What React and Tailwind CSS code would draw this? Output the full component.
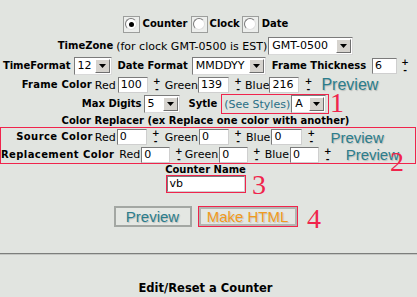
import React from "react";

const B = "text-[10px] font-bold leading-none whitespace-nowrap";
const R = "text-[11px] leading-none whitespace-nowrap";
const LINK = "font-['Liberation_Sans',Arial,sans-serif] text-[#2b7d8c] leading-none whitespace-nowrap [text-shadow:1px_1px_1px_rgba(0,0,0,0.18)]";
const NUM = "absolute font-['Liberation_Serif','Times_New_Roman',serif] text-[28px] leading-none text-[#f0244c]";

function Radio({ checked }) {
  return (
    <span className="w-[17px] h-[17px] border border-[#9c9e9c] bg-[#eceeec] flex items-center justify-center">
      <span className="w-[12px] h-[12px] rounded-full border border-t-[#7a7a7a] border-l-[#7a7a7a] border-r-[#e0e0e0] border-b-[#e0e0e0] bg-white flex items-center justify-center">
        {checked && <span className="w-[5px] h-[5px] rounded-full bg-black" />}
      </span>
    </span>
  );
}

function Sel({ w, v, cls = "" }) {
  return (
    <span className={`${w} ${cls} h-[18px] flex items-stretch bg-white border border-t-[#7b7b7b] border-l-[#7b7b7b] border-r-[#d9d9d9] border-b-[#d9d9d9]`}>
      <span className="flex-1 text-[11px] leading-[16px] pl-[3px] overflow-hidden whitespace-nowrap">{v}</span>
      <span className="w-[15px] my-[1px] mr-[1px] bg-[#d6d3ce] border border-t-white border-l-white border-r-[#6f6f6f] border-b-[#6f6f6f] flex items-center justify-center">
        <svg width="7" height="4" viewBox="0 0 7 4">
          <path d="M0 0h7L3.5 4z" fill="#000" />
        </svg>
      </span>
    </span>
  );
}

function Inp({ w, v, cls = "" }) {
  return (
    <span className={`${w} ${cls} h-[16px] bg-white border border-t-[#7b7b7b] border-l-[#7b7b7b] border-r-[#cfcfcf] border-b-[#cfcfcf] text-[11px] leading-[14px] pl-[2px] whitespace-nowrap overflow-hidden`}>
      {v}
    </span>
  );
}

function PM({ cls = "" }) {
  return (
    <span className={`${cls} w-[6px] h-[16px] flex flex-col items-center justify-between text-[9px] font-bold leading-[8px]`}>
      <span>+</span>
      <span>-</span>
    </span>
  );
}

export default function App() {
  return (
    <div className="relative w-[417px] h-[297px] overflow-hidden bg-[#e1e4e0] text-black font-['DejaVu_Sans',Verdana,sans-serif]">
      <div className="w-[411px] flex flex-col items-center pt-[14px]">
        {/* Row 1 */}
        <div className="h-[20px] flex items-center">
          <Radio checked />
          <span className={`${B} ml-[3px]`}>Counter</span>
          <span className="ml-[3px]"><Radio /></span>
          <span className={`${B} ml-[2px]`}>Clock</span>
          <span className="ml-[2px]"><Radio /></span>
          <span className={`${B} ml-[3px]`}>Date</span>
        </div>
        {/* Row 2 */}
        <div className="h-[20px] mt-[2px] flex items-center">
          <span className={B}>TimeZone</span>
          <span className={`${R} ml-[3px]`}>(for clock GMT-0500 is EST)</span>
          <Sel w="w-[85px]" v="GMT-0500" cls="ml-[1px]" />
        </div>
        {/* Row 3 */}
        <div className="h-[20px] flex items-center">
          <span className={B}>TimeFormat</span>
          <Sel w="w-[38px]" v="12" cls="ml-[3px]" />
          <span className={`${B} ml-[6px]`}>Date Format</span>
          <Sel w="w-[74px]" v="MMDDYY" cls="ml-[4px]" />
          <span className={`${B} ml-[6px]`}>Frame Thickness</span>
          <Inp w="w-[25px]" v="6" cls="ml-[6px]" />
          <PM cls="ml-[5px]" />
        </div>
        {/* Row 4 */}
        <div className="h-[18px] pr-[11px] flex items-center">
          <span className={`${B} tracking-[0.2px]`}>Frame Color</span>
          <span className={`${R} ml-[3px]`}>Red</span>
          <Inp w="w-[30px]" v="100" cls="ml-[2px]" />
          <PM cls="ml-[6px]" />
          <span className={`${R} ml-[5px]`}>Green</span>
          <Inp w="w-[31px]" v="139" />
          <PM cls="ml-[6px]" />
          <span className={`${R} ml-[4px]`}>Blue</span>
          <Inp w="w-[30px]" v="216" />
          <PM cls="ml-[6px]" />
          <span className={`${LINK} text-[16px] ml-[10px]`}>Preview</span>
        </div>
        {/* Row 5 */}
        <div className="h-[20px] flex items-center">
          <span className={B}>Max Digits</span>
          <Sel w="w-[36px]" v="5" cls="ml-[2px]" />
          <span className={`${B} ml-[9px]`}>Sytle</span>
          <span className="ml-[4px] h-[20px] flex items-center border border-[#f0244c] pl-[2px] pr-[2px]">
            <span className={`${R} text-[#2a6e85]`}>(See Styles)</span>
            <Sel w="w-[35px]" v="A" cls="ml-[1px]" />
          </span>
        </div>
        {/* Row 6 */}
        <div className="h-[13px] flex items-center">
          <span className={B}>Color Replacer (ex Replace one color with another)</span>
        </div>
      </div>
      {/* Color replacer box */}
      <div className="w-[416px] h-[37px] border border-[#f0244c] flex flex-col">
        <div className="h-[18px] pr-[16px] flex items-center justify-center">
          <span className={`${B} tracking-[0.4px]`}>Source Color</span>
          <span className={`${R} ml-[2px]`}>Red</span>
          <Inp w="w-[30px]" v="0" cls="ml-[1px]" />
          <PM cls="ml-[6px]" />
          <span className={`${R} ml-[6px]`}>Green</span>
          <Inp w="w-[30px]" v="0" cls="ml-[1px]" />
          <PM cls="ml-[6px]" />
          <span className={`${R} ml-[5px]`}>Blue</span>
          <Inp w="w-[31px]" v="0" cls="ml-[1px]" />
          <PM cls="ml-[6px]" />
          <span className={`${LINK} text-[15px] ml-[16px]`}>Preview</span>
        </div>
        <div className="h-[17px] pr-[16px] flex items-center justify-center">
          <span className={`${B} tracking-[0.4px]`}>Replacement Color</span>
          <span className={`${R} ml-[5px]`}>Red</span>
          <Inp w="w-[31px]" v="0" cls="ml-[1px]" />
          <PM cls="ml-[6px]" />
          <span className={`${R} ml-[3px]`}>Green</span>
          <Inp w="w-[31px]" v="0" cls="ml-[1px]" />
          <PM cls="ml-[6px]" />
          <span className={`${R} ml-[5px]`}>Blue</span>
          <Inp w="w-[31px]" v="0" cls="ml-[1px]" />
          <PM cls="ml-[6px]" />
          <span className={`${LINK} text-[15px] ml-[15px]`}>Preview</span>
        </div>
      </div>
      <div className="w-[411px] flex flex-col items-center">
        <div className="h-[11px] flex items-center">
          <span className={B}>Counter Name</span>
        </div>
        <div className="h-[18px] w-[80px] border border-[#f0244c] flex">
          <span className="flex-1 bg-white border border-t-[#7b7b7b] border-l-[#7b7b7b] border-r-[#d0d0d0] border-b-[#d0d0d0] text-[11px] leading-[14px] pl-[2px]">vb</span>
        </div>
        <div className="mt-[13px] h-[21px] flex items-stretch">
          <span className="w-[78px] border-2 border-[#a3a7a3] bg-[#e4e7e3] flex items-center justify-center">
            <span className={`${LINK} text-[15px]`}>Preview</span>
          </span>
          <span className="ml-[6px] w-[100px] border border-[#f0244c] flex">
            <span className="flex-1 border-2 border-[#b2b5b1] bg-[#e4e7e3] flex items-center justify-center">
              <span className="font-['Liberation_Sans',Arial,sans-serif] text-[15px] leading-none text-[#f09a20] whitespace-nowrap [text-shadow:1px_1px_1px_rgba(0,0,0,0.15)]">Make HTML</span>
            </span>
          </span>
        </div>
      </div>
      <div className="mt-[26px] h-[1px] bg-[#7c7e7c]" />
      <div className="h-[1px] bg-[#c4c6c3]" />
      <div className="w-[411px] mt-[26px] flex justify-center">
        <span className="text-[11.5px] font-bold leading-[14px] whitespace-nowrap">Edit/Reset a Counter</span>
      </div>

      <span className={`${NUM} left-[330px] top-[89px]`}>1</span>
      <span className={`${NUM} left-[390px] top-[148px]`}>2</span>
      <span className={`${NUM} left-[252px] top-[171px]`}>3</span>
      <span className={`${NUM} left-[307px] top-[205px]`}>4</span>
    </div>
  );
}
